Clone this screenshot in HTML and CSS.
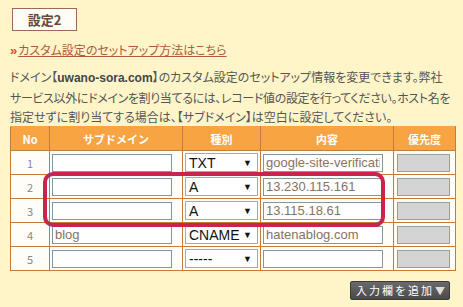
FILE: index.html
```html
<!DOCTYPE html>
<html>

<head>
    <meta charset="UTF-8">
    <meta name="viewport" content="width=device-width, initial-scale=1.0">
    <title>設定2</title>
    <link rel="stylesheet" href="styles.css">
</head>

<body>
    <div class="page">
        <div class="setting-title">設定2</div>

        <div class="howto">
            <span class="arrow">&raquo;</span><a href="#" class="howto-link">カスタム設定のセットアップ方法はこちら</a>
        </div>

        <p class="desc">
            <span class="line">ドメイン【<b>uwano-sora.com</b>】のカスタム設定のセットアップ情報を変更できます。弊社</span>
            <span class="line tight">サービス以外にドメインを割り当てるには、レコード値の設定を行ってください。ホスト名を</span>
            <span class="line">指定せずに割り当てする場合は、【サブドメイン】は空白に設定してください。</span>
        </p>

        <div class="table-wrap">
            <table class="record-table">
                <thead>
                    <tr>
                        <th class="col-no">No</th>
                        <th class="col-sub">サブドメイン</th>
                        <th class="col-type">種別</th>
                        <th class="col-value">内容</th>
                        <th class="col-prio">優先度</th>
                    </tr>
                </thead>
                <tbody>
                    <tr>
                        <td class="num">1</td>
                        <td><input type="text" class="text-input" value=""></td>
                        <td><span class="select-box">TXT</span></td>
                        <td><input type="text" class="text-input" value="google-site-verification"></td>
                        <td><input type="text" class="prio-input" disabled></td>
                    </tr>
                    <tr>
                        <td class="num">2</td>
                        <td><input type="text" class="text-input" value=""></td>
                        <td><span class="select-box">A</span></td>
                        <td><input type="text" class="text-input" value="13.230.115.161"></td>
                        <td><input type="text" class="prio-input" disabled></td>
                    </tr>
                    <tr>
                        <td class="num">3</td>
                        <td><input type="text" class="text-input" value=""></td>
                        <td><span class="select-box">A</span></td>
                        <td><input type="text" class="text-input" value="13.115.18.61"></td>
                        <td><input type="text" class="prio-input" disabled></td>
                    </tr>
                    <tr>
                        <td class="num">4</td>
                        <td><input type="text" class="text-input" value="blog"></td>
                        <td><span class="select-box">CNAME</span></td>
                        <td><input type="text" class="text-input" value="hatenablog.com"></td>
                        <td><input type="text" class="prio-input" disabled></td>
                    </tr>
                    <tr>
                        <td class="num">5</td>
                        <td><input type="text" class="text-input" value=""></td>
                        <td><span class="select-box">-----</span></td>
                        <td><input type="text" class="text-input" value=""></td>
                        <td><input type="text" class="prio-input" disabled></td>
                    </tr>
                </tbody>
            </table>
            <div class="highlight"></div>
        </div>

        <div class="actions">
            <button class="add-button">入力欄を追加<span class="add-arrow">▼</span></button>
        </div>
    </div>
</body>

</html>
```

FILE: styles.css
```css
:root {
    --bg-color: #fff5c9;
    --header-color: #f8a443;
    --border-color: #c27c3c;
    --text-color: #555;
    --link-color: #b05a3a;
    --mark-color: #c8244c;
}

body {
    margin: 0;
    background-color: var(--bg-color);
    font-family: "Noto Sans CJK JP", "Liberation Sans", sans-serif;
    font-size: 12px;
    color: var(--text-color);
}

.page {
    padding: 8px 13px 0 10px;
}

.setting-title {
    display: flex;
    justify-content: center;
    align-items: center;
    box-sizing: border-box;
    width: 65px;
    height: 23px;
    margin-left: 2px;
    border: 1px solid #9c6a52;
    background-color: #fffdf6;
    color: #6a4838;
    font-weight: bold;
    font-size: 13px;
}

.howto {
    margin-top: 10px;
    line-height: 18px;
    font-feature-settings: "palt";
}

.arrow {
    color: #e0482c;
    font-weight: bold;
    font-family: "Liberation Sans", sans-serif;
    font-size: 13px;
    margin-right: 1px;
}

.howto-link {
    color: var(--link-color);
    text-decoration: underline;
}

.desc {
    margin: 7px 0 0;
    line-height: 19px;
    font-feature-settings: "palt";
    white-space: nowrap;
}

.desc .line {
    display: block;
}

.desc .line.tight {
    letter-spacing: -0.35px;
}

.desc b {
    font-family: "Liberation Sans", sans-serif;
    color: #444;
}

.table-wrap {
    position: relative;
    width: 440px;
}

.record-table {
    width: 440px;
    border-collapse: collapse;
    table-layout: fixed;
    background-color: #fffdf7;
}

.record-table th {
    height: 23px;
    padding: 0;
    background-color: var(--header-color);
    color: #fff;
    font-size: 11px;
    font-weight: bold;
    border: 1px solid var(--border-color);
    border-top-color: var(--header-color);
}

.record-table td {
    height: 23px;
    padding: 0 2px;
    border: 1px solid var(--border-color);
}

.col-no {
    width: 38px;
}

.col-sub {
    width: 132px;
}

.col-type {
    width: 77px;
}

.col-value {
    width: 132px;
}

.col-prio {
    width: 61px;
}

.num {
    text-align: center;
    font-size: 11px;
    color: #888;
}

.text-input {
    box-sizing: border-box;
    width: 120px;
    height: 18px;
    margin: 0;
    padding: 0 2px;
    border: 1px solid #7f98a6;
    background-color: #fff;
    font-family: "Liberation Sans", sans-serif;
    font-size: 13px;
    color: #8a7262;
    display: block;
}

.select-box {
    box-sizing: border-box;
    display: block;
    position: relative;
    width: 73px;
    height: 19px;
    padding-left: 3px;
    border: 1px solid #a9a9a9;
    background-color: #fff;
    font-family: "Liberation Sans", sans-serif;
    font-size: 14px;
    line-height: 18px;
    color: #111;
}

.select-box::after {
    content: "▼";
    position: absolute;
    right: 5px;
    top: 0;
    font-size: 9px;
    color: #111;
}

.prio-input {
    box-sizing: border-box;
    display: block;
    width: 53px;
    height: 18px;
    margin: 0 0 0 1px;
    border: 1px solid #8ca0ae;
    background-color: #d4d4d4;
}

.highlight {
    position: absolute;
    left: 33px;
    top: 46px;
    width: 334px;
    height: 47px;
    border: 4px solid var(--mark-color);
    border-radius: 10px;
    pointer-events: none;
}

.actions {
    display: flex;
    justify-content: flex-end;
    width: 440px;
    margin-top: 10px;
}

.add-button {
    height: 19px;
    padding: 0 4px 0 5px;
    border: 1px solid #3a3a3a;
    border-radius: 2px;
    background: linear-gradient(#6a6a6a, #4a4a4a);
    color: #fff;
    font-family: "Noto Sans CJK JP", sans-serif;
    font-size: 11px;
    letter-spacing: 2px;
    line-height: 17px;
    cursor: pointer;
}

.add-arrow {
    display: inline-block;
    margin-left: 1px;
    font-size: 10px;
    letter-spacing: 0;
    color: #ddd;
}
```
